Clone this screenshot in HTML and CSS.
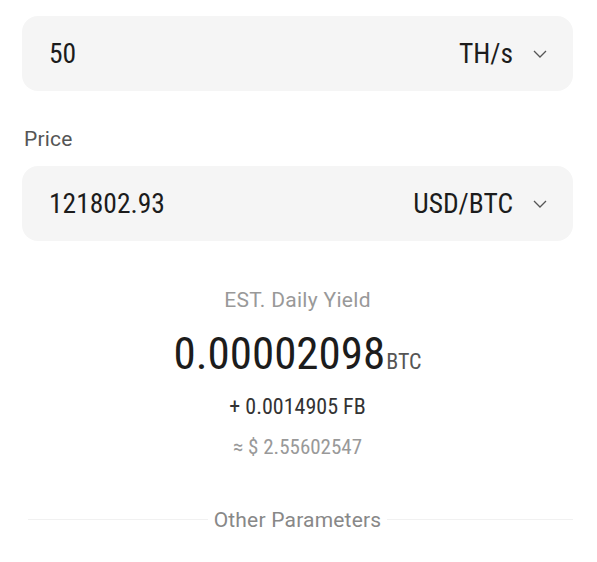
FILE: index.html
```html
<!DOCTYPE html>
<html lang="en">
<head>
<meta charset="utf-8">
<title>Mining Calculator</title>
<link rel="stylesheet" href="styles.css">
</head>
<body>
<main class="calc">
  <div class="field">
    <span class="field-value">50</span>
    <span class="field-unit">TH/s
      <svg class="chev" width="14" height="8" viewBox="0 0 14 8"><polyline points="1,1 7,7 13,1" fill="none" stroke="#555" stroke-width="1.3"/></svg>
    </span>
  </div>

  <div class="label">Price</div>
  <div class="field">
    <span class="field-value">121802.93</span>
    <span class="field-unit">USD/BTC
      <svg class="chev" width="14" height="8" viewBox="0 0 14 8"><polyline points="1,1 7,7 13,1" fill="none" stroke="#555" stroke-width="1.3"/></svg>
    </span>
  </div>

  <section class="yield">
    <div class="yield-title">EST. Daily Yield</div>
    <div class="yield-main"><span class="big">0.00002098</span><span class="big-unit">BTC</span></div>
    <div class="yield-fb">+ 0.0014905 FB</div>
    <div class="yield-usd">≈ $ 2.55602547</div>
  </section>

  <div class="divider"><span>Other Parameters</span></div>
</main>
</body>
</html>
```
FILE: styles.css
```css
html, body {
  margin: 0;
  padding: 0;
  background: #fff;
}
body {
  font-family: Roboto, "Liberation Sans", sans-serif;
}
.calc {
  padding: 16px 24px 0 22px;
  display: flex;
  flex-direction: column;
}
.field {
  height: 75px;
  background: #f5f5f5;
  border-radius: 16px;
  display: flex;
  align-items: center;
  justify-content: space-between;
  padding: 0 26px 0 26px;
  box-sizing: border-box;
}
.field-value, .field-unit {
  font-family: "Roboto Condensed", "Liberation Sans Narrow", Roboto, sans-serif;
  font-size: 27.5px;
  font-weight: 400;
  color: #1c1c1c;
}
.field-value {
  padding-left: 1px;
}
.field-unit {
  display: flex;
  align-items: center;
  gap: 20px;
}
.chev {
  display: block;
}
.label {
  margin-top: 34px;
  margin-bottom: 13px;
  font-size: 21px;
  font-weight: 400;
  letter-spacing: 0.2px;
  line-height: 28px;
  color: #555;
  padding-left: 2px;
}
.yield {
  display: flex;
  flex-direction: column;
  align-items: center;
  margin-top: 45px;
}
.yield-title {
  font-size: 21px;
  font-weight: 400;
  letter-spacing: 0.3px;
  line-height: 28px;
  color: #999;
}
.yield-main {
  margin-top: 12px;
  line-height: 56px;
  font-family: "Roboto Condensed", "Liberation Sans Narrow", Roboto, sans-serif;
  color: #1c1c1c;
}
.big {
  font-size: 45px;
  font-weight: 400;
}
.big-unit {
  font-size: 22px;
  color: #555;
  margin-left: 1px;
}
.yield-fb {
  margin-top: 1px;
  font-family: "Roboto Condensed", "Liberation Sans Narrow", Roboto, sans-serif;
  font-size: 22px;
  line-height: 28px;
  color: #333;
}
.yield-usd {
  margin-top: 12px;
  font-family: "Roboto Condensed", "Liberation Sans Narrow", Roboto, sans-serif;
  font-size: 21px;
  line-height: 28px;
  color: #999;
}
.divider {
  margin-top: 45px;
  display: flex;
  align-items: center;
  justify-content: center;
  position: relative;
}
.divider::before {
  content: "";
  position: absolute;
  left: 6px;
  right: 0;
  top: 13px;
  height: 1px;
  background: #f1f1f1;
}
.divider span {
  position: relative;
  background: #fff;
  padding: 0 6px;
  font-size: 21px;
  font-weight: 400;
  letter-spacing: 0.2px;
  line-height: 28px;
  color: #888;
}
```
